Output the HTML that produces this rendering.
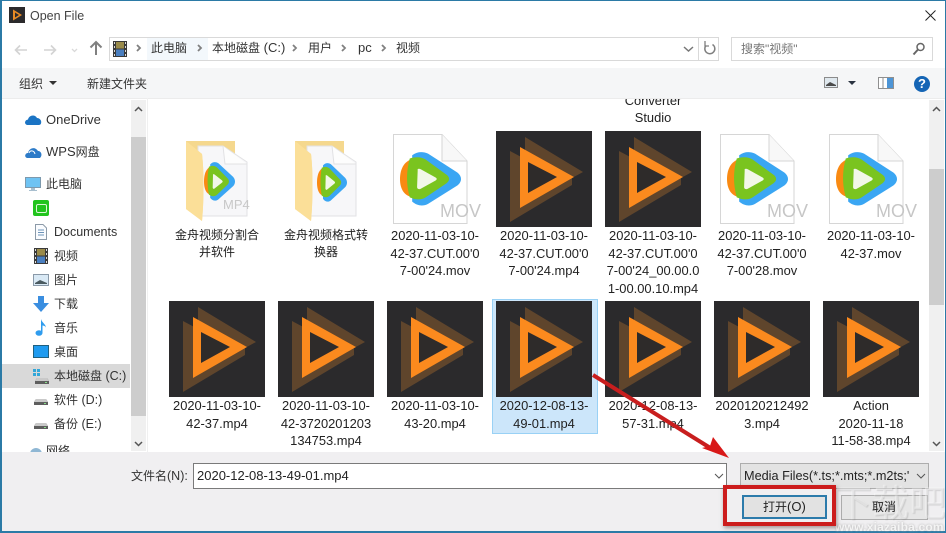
<!DOCTYPE html>
<html><head><meta charset="utf-8">
<style>
html,body{margin:0;padding:0;width:946px;height:533px;overflow:hidden;background:#fff}
body{position:relative;font-family:"Liberation Sans","Noto Sans CJK SC",sans-serif;font-size:13px;color:#222}
.a{position:absolute}
.t{position:absolute;white-space:nowrap;line-height:18px}
.c{font-size:12px}
.f{position:absolute;width:106px;text-align:center;line-height:17.5px;font-size:12.9px;color:#222;white-space:nowrap}
.th{position:absolute;width:96px;height:96px}
svg{display:block;overflow:visible}
</style></head><body>
<svg width="0" height="0" style="position:absolute">
<defs>
<symbol id="pl" viewBox="0 0 96 96">
<rect width="96" height="96" fill="#2b2a2c"/>
<path d="M29 6L87 41L76 47V54L14 91V20L29 28Z" fill="#5f452c"/>
<path d="M24 16L78 46L24 77Z" fill="#fb8a1e"/>
<path d="M32 31L61 46L32 62Z" fill="#2e2b2a"/>
</symbol>
<symbol id="q" viewBox="0 0 100 100" preserveAspectRatio="none">
<path d="M20 6C28 -1 38 -1 46 3L94 38C102 45 102 55 94 62L46 96C38 101 28 100 20 92Z" fill="#3aa6f3"/>
<path d="M25 12C8 14 0 30 0 50C0 70 8 84 25 84Z" fill="#f98a12"/>
<path d="M16 12C28 8 36 10 42 14L76 42C82 47 82 53 76 58L42 84C36 88 28 90 16 84C10 60 10 36 16 12Z" fill="#7ac41f"/>
<path d="M29 34C28 31 31 30 34 32L58 47C61 49 61 51 58 53L34 68C31 70 28 68 28 65Z" fill="#f2f7e8"/>
</symbol>
<symbol id="mv" viewBox="0 0 96 96">
<path d="M3.500 3.500H52L77 30V92.500H3.500Z" fill="#fff" stroke="#d6d6d6"/>
<path d="M52 3.500V30H77" fill="#f8f8f8" stroke="#d6d6d6"/>
<use href="#q" x="10" y="21" width="61" height="54"/>
<text x="50" y="86" font-family="Liberation Sans" font-size="18" fill="#c6c6c6" textLength="41" lengthAdjust="spacingAndGlyphs">MOV</text>
</symbol>
<symbol id="fd" viewBox="0 0 64 84">
<path d="M1 1H50V62H1Z" fill="#f5d88e"/>
<path d="M13 6H38L62 22V76H13Z" fill="#f7f7f9" stroke="#e2e2e4"/>
<path d="M38 6L40 24H62" fill="#fdfdfd" stroke="#e2e2e4"/>
<path d="M1 1L17 14C19 30 19 60 17 81L1 69Z" fill="#fbdf98"/>
</symbol>
<symbol id="film" viewBox="0 0 14 16">
<rect width="14" height="16" fill="#3a3a3a"/>
<rect x="3" y="1" width="8" height="6.500" fill="#9a8b4a"/>
<rect x="3" y="8.500" width="8" height="6.500" fill="#4a7fc0"/>
<path d="M1 1h1v2H1zM1 5h1v2H1zM1 9h1v2H1zM1 13h1v2H1zM12 1h1v2h-1zM12 5h1v2h-1zM12 9h1v2h-1zM12 13h1v2h-1z" fill="#ddd"/>
</symbol>
<symbol id="drv" viewBox="0 0 14 6">
<path d="M2 0H12L14 3V6H0V3Z" fill="#5e5e5e"/><path d="M2 0H12L14 3H0Z" fill="#c9c9c9"/><rect x="10" y="4" width="2" height="1" fill="#8d8"/>
</symbol>
</defs>
</svg>

<!-- window border -->
<div class="a" style="left:0;top:0;width:946px;height:1px;background:#2b7aa6"></div>
<div class="a" style="left:0;top:0;width:1.500px;height:533px;background:#2b7aa6"></div>
<div class="a" style="left:945px;top:0;width:1px;height:533px;background:#2b7aa6"></div>

<!-- title -->
<svg class="a" style="left:9px;top:7px" width="16" height="16" viewBox="0 0 16 16"><rect width="16" height="16" fill="#2b2a2c"/><path d="M4 2.500L13 8L4 13.500Z" fill="#e98a24"/><path d="M6 5.500L10 8L6 10.500Z" fill="#2b2a2c"/></svg>
<div class="t" style="left:30px;top:7px;color:#444;font-size:12.500px">Open File</div>
<svg class="a" style="left:925px;top:10px" width="11" height="11" viewBox="0 0 11 11"><path d="M.5.500L10.500 10.500M10.500.500L.5 10.500" stroke="#222" fill="none"/></svg>

<!-- nav -->
<svg class="a" style="left:14px;top:42px" width="100" height="16" viewBox="0 0 100 16" fill="none"><path d="M13 6H2M6 1.500L1.500 6L6 10.500" stroke="#d3d3d3" stroke-width="1.600" transform="translate(0 2)"/><path d="M30 8H41M37 3.500L41.500 8L37 12.500" stroke="#d3d3d3" stroke-width="1.600"/><path d="M58 7L60.500 9.500L63 7" stroke="#d9d9d9" stroke-width="1.300"/></svg>
<svg class="a" style="left:89px;top:40px" width="14" height="15" viewBox="0 0 14 15" fill="none"><path d="M7 15V2M1.500 7.500L7 2L12.500 7.500" stroke="#808080" stroke-width="2"/></svg>
<div class="a" style="left:109px;top:37px;width:608px;height:22px;border:1px solid #d9d9d9;background:#fff"></div>
<div class="a" style="left:147px;top:38px;width:61px;height:22px;background:#f3f8fc"></div>
<div class="a" style="left:698px;top:37px;width:1px;height:23px;background:#d9d9d9"></div>
<svg class="a" style="left:113px;top:41px" width="14" height="16"><use href="#film" width="14" height="16"/></svg>
<svg class="a" style="left:134px;top:43px" width="370" height="10" viewBox="0 0 370 10" fill="none" stroke="#808080" stroke-width="1.800"><path d="M2 2L5 5L2 8M63 2L66 5L63 8M158 2L161 5L158 8M207 2L210 5L207 8M247 2L250 5L247 8" transform="translate(1 0)"/></svg>
<div class="t c" style="left:151px;top:39px;color:#333">此电脑</div>
<div class="t" style="left:212px;top:39px;color:#333"><span class="c">本地磁盘</span> (C:)</div>
<div class="t c" style="left:308px;top:39px;color:#333">用户</div>
<div class="t" style="left:358px;top:39px;color:#333">pc</div>
<div class="t c" style="left:396px;top:39px;color:#333">视频</div>
<svg class="a" style="left:683px;top:45px" width="12" height="8" fill="none"><path d="M1 2L5.500 6L10 2" stroke="#777" stroke-width="1.500"/></svg>
<svg class="a" style="left:703px;top:41px" width="13" height="15" viewBox="0 0 13 15" fill="none"><path d="M9.500 3.500A5 5 0 1 1 3 4.500" stroke="#808080" stroke-width="1.500"/><path d="M2 1V6H6" stroke="#808080" stroke-width="1.300" transform="translate(0 -1)"/></svg>
<div class="a" style="left:731px;top:37px;width:200px;height:22px;border:1px solid #d9d9d9"></div>
<div class="t c" style="left:741px;top:40px;color:#777">搜索"视频"</div>
<svg class="a" style="left:912px;top:42px" width="14" height="14" viewBox="0 0 14 14" fill="none"><circle cx="8.500" cy="5" r="3.500" stroke="#666" stroke-width="1.500"/><path d="M6 7.500L1.500 12.500" stroke="#666" stroke-width="2"/></svg>

<!-- toolbar -->
<div class="a" style="left:2px;top:68px;width:943px;height:30px;background:#f5f6f7;border-bottom:1px solid #ececec"></div>
<div class="t c" style="left:19px;top:75px;color:#333">组织</div>
<div class="a" style="left:49px;top:81px;width:0;height:0;border:4px solid transparent;border-top:4px solid #333;border-bottom:0"></div>
<div class="t c" style="left:87px;top:75px;color:#333">新建文件夹</div>
<svg class="a" style="left:824px;top:77px" width="14" height="11"><rect x=".5" y=".5" width="13" height="10" fill="#dfe8ee" stroke="#8b8b8b"/><path d="M2 8L6 5L12 8V9H2Z" fill="#4a4a4a"/></svg>
<div class="a" style="left:848px;top:81px;width:0;height:0;border:4px solid transparent;border-top:4px solid #2a3340;border-bottom:0"></div>
<svg class="a" style="left:878px;top:77px" width="16" height="12"><rect x=".5" y=".5" width="15" height="11" fill="#fff" stroke="#8f8f8f"/><rect x="9" y="1" width="6" height="10" fill="#4d95d6"/><path d="M5 1V11" stroke="#8f8f8f"/></svg>
<div class="a" style="left:914px;top:76px;width:16px;height:16px;border-radius:50%;background:#1565b5;color:#fff;font:bold 13px/16px 'Liberation Sans',sans-serif;text-align:center">?</div>

<!-- sidebar -->
<svg class="a" style="left:25px;top:114px" width="17" height="11" viewBox="0 0 17 11"><path d="M2 11C-1 10-.5 6 3 5.500C4 1 10 0 12 4C15 4 17 7 16 9.500C15.500 11 14 11 13 11Z" fill="#1b74c4"/></svg>
<div class="t" style="left:46px;top:111px;color:#333">OneDrive</div>
<svg class="a" style="left:25px;top:146px" width="17" height="12" viewBox="0 0 17 12"><path d="M2 12C-1 11 0 7 3 7C4 2 10 0 13 5C16 5 18 9 15 12Z" fill="#2d7bc8"/><path d="M4 7C5 4 9 4 10 8" stroke="#fff" fill="none"/></svg>
<div class="t" style="left:46px;top:143px;color:#333">WPS<span class="c">网盘</span></div>
<svg class="a" style="left:25px;top:177px" width="16" height="15"><rect x=".5" y=".5" width="15" height="10" fill="#6fc3f3" stroke="#7d99ad"/><path d="M6 11H10V13H12V14H4V13H6Z" fill="#a8bfcf"/></svg>
<div class="t c" style="left:46px;top:175px;color:#333">此电脑</div>
<div class="a" style="left:33px;top:200px;width:16px;height:16px;background:#21c41d;border-radius:2px"></div>
<div class="a" style="left:36px;top:204px;width:9px;height:7px;border:1px solid #d8f7d4;border-radius:2px"></div>
<svg class="a" style="left:35px;top:224px" width="12" height="16"><path d="M.5.500H8L11.500 4V15.500H.5Z" fill="#fafcff" stroke="#8c9aa8"/><path d="M3 6H9M3 8.500H9M3 11H9" stroke="#6c93b8"/></svg>
<div class="t" style="left:54px;top:223px;color:#333;font-size:12.500px">Documents</div>
<svg class="a" style="left:34px;top:248px" width="14" height="16"><use href="#film" width="14" height="16"/></svg>
<div class="t c" style="left:54px;top:247px;color:#333">视频</div>
<svg class="a" style="left:33px;top:274px" width="16" height="12"><rect x=".5" y=".5" width="15" height="11" fill="#d9e9f5" stroke="#8a99a8"/><path d="M2 9L7 6L14 9V10H2Z" fill="#4a5a60"/></svg>
<div class="t c" style="left:54px;top:271px;color:#333">图片</div>
<svg class="a" style="left:33px;top:296px" width="16" height="16" viewBox="0 0 16 16"><path d="M5 0H11V7H16L8 16L0 7H5Z" fill="#3a8ee0"/></svg>
<div class="t c" style="left:54px;top:295px;color:#333">下载</div>
<svg class="a" style="left:35px;top:319px" width="12" height="17" viewBox="0 0 12 17"><ellipse cx="4" cy="14" rx="3.500" ry="2.800" fill="#2f9cee"/><path d="M6 14V0C7 4 11 5 11 9C11 7 8 6.500 7.500 6.500V14Z" fill="#2f9cee"/></svg>
<div class="t c" style="left:54px;top:319px;color:#333">音乐</div>
<svg class="a" style="left:33px;top:345px" width="16" height="13"><rect x=".5" y=".5" width="15" height="12" fill="#1f9bf0" stroke="#20607f"/></svg>
<div class="t c" style="left:54px;top:343px;color:#333">桌面</div>
<div class="a" style="left:2px;top:364px;width:128px;height:24px;background:#d9d9d9"></div>
<svg class="a" style="left:33px;top:369px" width="16" height="15"><path d="M0 0h3v3H0zM4 0h3v3H4zM0 4h3v3H0zM4 4h3v3H4z" fill="#32a7d8"/><use href="#drv" x="2" y="9" width="14" height="6"/></svg>
<div class="t" style="left:54px;top:367px;color:#333;font-size:12.500px"><span class="c">本地磁盘</span> (C:)</div>
<svg class="a" style="left:34px;top:399px" width="14" height="6"><use href="#drv" width="14" height="6"/></svg>
<div class="t" style="left:54px;top:391px;color:#333;font-size:12.500px"><span class="c">软件</span> (D:)</div>
<svg class="a" style="left:34px;top:423px" width="14" height="6"><use href="#drv" width="14" height="6"/></svg>
<div class="t" style="left:54px;top:415px;color:#333;font-size:12.500px"><span class="c">备份</span> (E:)</div>
<div class="a" style="left:30px;top:448px;width:12px;height:12px;border-radius:50%;background:#8fb7d4"></div>
<div class="t c" style="left:46px;top:442px;color:#333">网络</div>
<div class="a" style="left:131px;top:100px;width:15px;height:351px;background:#f0f0f0"></div>
<div class="a" style="left:131px;top:137px;width:15px;height:279px;background:#cdcdcd"></div>
<svg class="a" style="left:134px;top:106px" width="9" height="6" fill="none"><path d="M1 5L4.500 1.500L8 5" stroke="#555" stroke-width="1.500"/></svg>
<svg class="a" style="left:134px;top:441px" width="9" height="6" fill="none"><path d="M1 1L4.500 4.500L8 1" stroke="#555" stroke-width="1.500"/></svg>
<div class="a" style="left:147px;top:98px;width:1px;height:354px;background:#f0f0f0"></div>

<!-- grid -->
<div class="f" style="left:600px;top:92px;line-height:17px">Converter<br>Studio</div>
<div class="a" style="left:600px;top:68px;width:106px;height:30px;background:#f5f6f7;border-bottom:1px solid #ececec"></div>

<svg class="a" style="left:185px;top:140px" width="64" height="84"><use href="#fd" width="64" height="84"/></svg>
<svg class="a" style="left:294px;top:140px" width="64" height="84"><use href="#fd" width="64" height="84"/></svg>
<svg class="a" style="left:204px;top:162px" width="31" height="39"><use href="#q" width="31" height="39"/></svg>
<svg class="a" style="left:317px;top:163px" width="30" height="39"><use href="#q" width="30" height="39"/></svg>
<svg class="a" style="left:186px;top:141px" width="20" height="82"><path d="M0 0L16 13C18 29 18 59 16 80L0 68Z" fill="#fbdf98"/></svg>
<svg class="a" style="left:295px;top:141px" width="20" height="82"><path d="M0 0L16 13C18 29 18 59 16 80L0 68Z" fill="#fbdf98"/></svg>
<div class="t" style="left:223px;top:196px;font-size:13px;color:#c8c8c8">MP4</div>
<svg class="a th" style="left:390px;top:131px"><use href="#mv" width="96" height="96"/></svg>
<svg class="a th" style="left:496px;top:131px"><use href="#pl" width="96" height="96"/></svg>
<svg class="a th" style="left:605px;top:131px"><use href="#pl" width="96" height="96"/></svg>
<svg class="a th" style="left:717px;top:131px"><use href="#mv" width="96" height="96"/></svg>
<svg class="a th" style="left:826px;top:131px"><use href="#mv" width="96" height="96"/></svg>

<div class="f" style="left:164px;top:227px;font-size:12px;line-height:17px">金舟视频分割合<br>并软件</div>
<div class="f" style="left:273px;top:227px;font-size:12px;line-height:17px">金舟视频格式转<br>换器</div>
<div class="f" style="left:382px;top:227px">2020-11-03-10-<br>42-37.CUT.00'0<br>7-00'24.mov</div>
<div class="f" style="left:491px;top:227px">2020-11-03-10-<br>42-37.CUT.00'0<br>7-00'24.mp4</div>
<div class="f" style="left:600px;top:227px">2020-11-03-10-<br>42-37.CUT.00'0<br>7-00'24_00.00.0<br>1-00.00.10.mp4</div>
<div class="f" style="left:709px;top:227px">2020-11-03-10-<br>42-37.CUT.00'0<br>7-00'28.mov</div>
<div class="f" style="left:818px;top:227px">2020-11-03-10-<br>42-37.mov</div>

<div class="a" style="left:492px;top:299px;width:104px;height:133px;background:#cce6fa;border:1px solid #99d1f5"></div>
<svg class="a th" style="left:169px;top:301px"><use href="#pl" width="96" height="96"/></svg>
<svg class="a th" style="left:278px;top:301px"><use href="#pl" width="96" height="96"/></svg>
<svg class="a th" style="left:387px;top:301px"><use href="#pl" width="96" height="96"/></svg>
<svg class="a th" style="left:496px;top:301px"><use href="#pl" width="96" height="96"/></svg>
<svg class="a th" style="left:605px;top:301px"><use href="#pl" width="96" height="96"/></svg>
<svg class="a th" style="left:714px;top:301px"><use href="#pl" width="96" height="96"/></svg>
<svg class="a th" style="left:823px;top:301px"><use href="#pl" width="96" height="96"/></svg>

<div class="f" style="left:164px;top:397px">2020-11-03-10-<br>42-37.mp4</div>
<div class="f" style="left:273px;top:397px">2020-11-03-10-<br>42-3720201203<br>134753.mp4</div>
<div class="f" style="left:382px;top:397px">2020-11-03-10-<br>43-20.mp4</div>
<div class="f" style="left:491px;top:397px">2020-12-08-13-<br>49-01.mp4</div>
<div class="f" style="left:600px;top:397px">2020-12-08-13-<br>57-31.mp4</div>
<div class="f" style="left:709px;top:397px">2020120212492<br>3.mp4</div>
<div class="f" style="left:818px;top:397px">Action<br>2020-11-18<br>11-58-38.mp4</div>

<!-- right scrollbar -->
<div class="a" style="left:929px;top:100px;width:15px;height:351px;background:#f0f0f0"></div>
<div class="a" style="left:929px;top:169px;width:15px;height:136px;background:#cdcdcd"></div>
<svg class="a" style="left:932px;top:106px" width="9" height="6" fill="none"><path d="M1 5L4.500 1.500L8 5" stroke="#555" stroke-width="1.500"/></svg>
<svg class="a" style="left:932px;top:441px" width="9" height="6" fill="none"><path d="M1 1L4.500 4.500L8 1" stroke="#555" stroke-width="1.500"/></svg>

<!-- bottom panel -->
<div class="a" style="left:2px;top:452px;width:943px;height:79px;background:#f0eff1"></div>
<div class="a" style="left:0;top:531px;width:946px;height:2px;background:#2b7aa6"></div>
<div class="t" style="left:131px;top:467px;color:#333;font-size:12.500px"><span class="c">文件名</span>(N):</div>
<div class="a" style="left:193px;top:463px;width:532px;height:24px;border:1px solid #7a7a7a;background:#fff"></div>
<div class="t" style="left:197px;top:467px;color:#222">2020-12-08-13-49-01.mp4</div>
<svg class="a" style="left:714px;top:473px" width="10" height="6" fill="none"><path d="M1 1L5 5L9 1" stroke="#555"/></svg>
<div class="a" style="left:740px;top:463px;width:187px;height:24px;border:1px solid #adadad;background:#e3e3e3"></div>
<div class="t" style="left:744px;top:467px;color:#222;width:166px;overflow:hidden;font-size:12.700px">Media Files(*.ts;*.mts;*.m2ts;'</div>
<svg class="a" style="left:916px;top:473px" width="10" height="6" fill="none"><path d="M1 1L5 5L9 1" stroke="#555"/></svg>

<!-- buttons -->
<div class="a" style="left:742px;top:495px;width:81px;height:20px;border:2px solid #2c7bab;background:#e2e2e2"></div>
<div class="t" style="left:763px;top:498px;color:#222;font-size:13px"><span class="c">打开</span>(O)</div>
<div class="a" style="left:841px;top:495px;width:85px;height:23px;border:1px solid #adadad;background:#e6e6e6"></div>

<!-- watermark -->
<div class="t" style="left:835px;top:478px;font-size:37px;line-height:44px;color:rgba(255,255,255,.4);text-shadow:1px 1px 1px rgba(110,110,110,.22);font-family:'Noto Sans CJK SC',sans-serif">下载吧</div>
<div class="t" style="left:835px;top:518px;font-size:12px;color:#f4f4f4;font-weight:bold;letter-spacing:.2px;text-shadow:0 0 2px #aaa">www.xiazaiba.com</div>
<div class="t c" style="left:872px;top:498px;color:#222">取消</div>

<div class="a" style="left:723px;top:485px;width:105px;height:33px;border:4px solid #cc1c1c;box-shadow:1px 2px 4px rgba(90,60,60,.5)"></div>

<!-- arrow -->
<svg class="a" style="left:0;top:0;pointer-events:none" width="946" height="533" viewBox="0 0 946 533"><path d="M593 375L712 449" stroke="#c81e1e" stroke-width="4" fill="none"/><path d="M729 458L702 448L710 446L713 437Z" fill="#d81818"/></svg>
</body></html>
